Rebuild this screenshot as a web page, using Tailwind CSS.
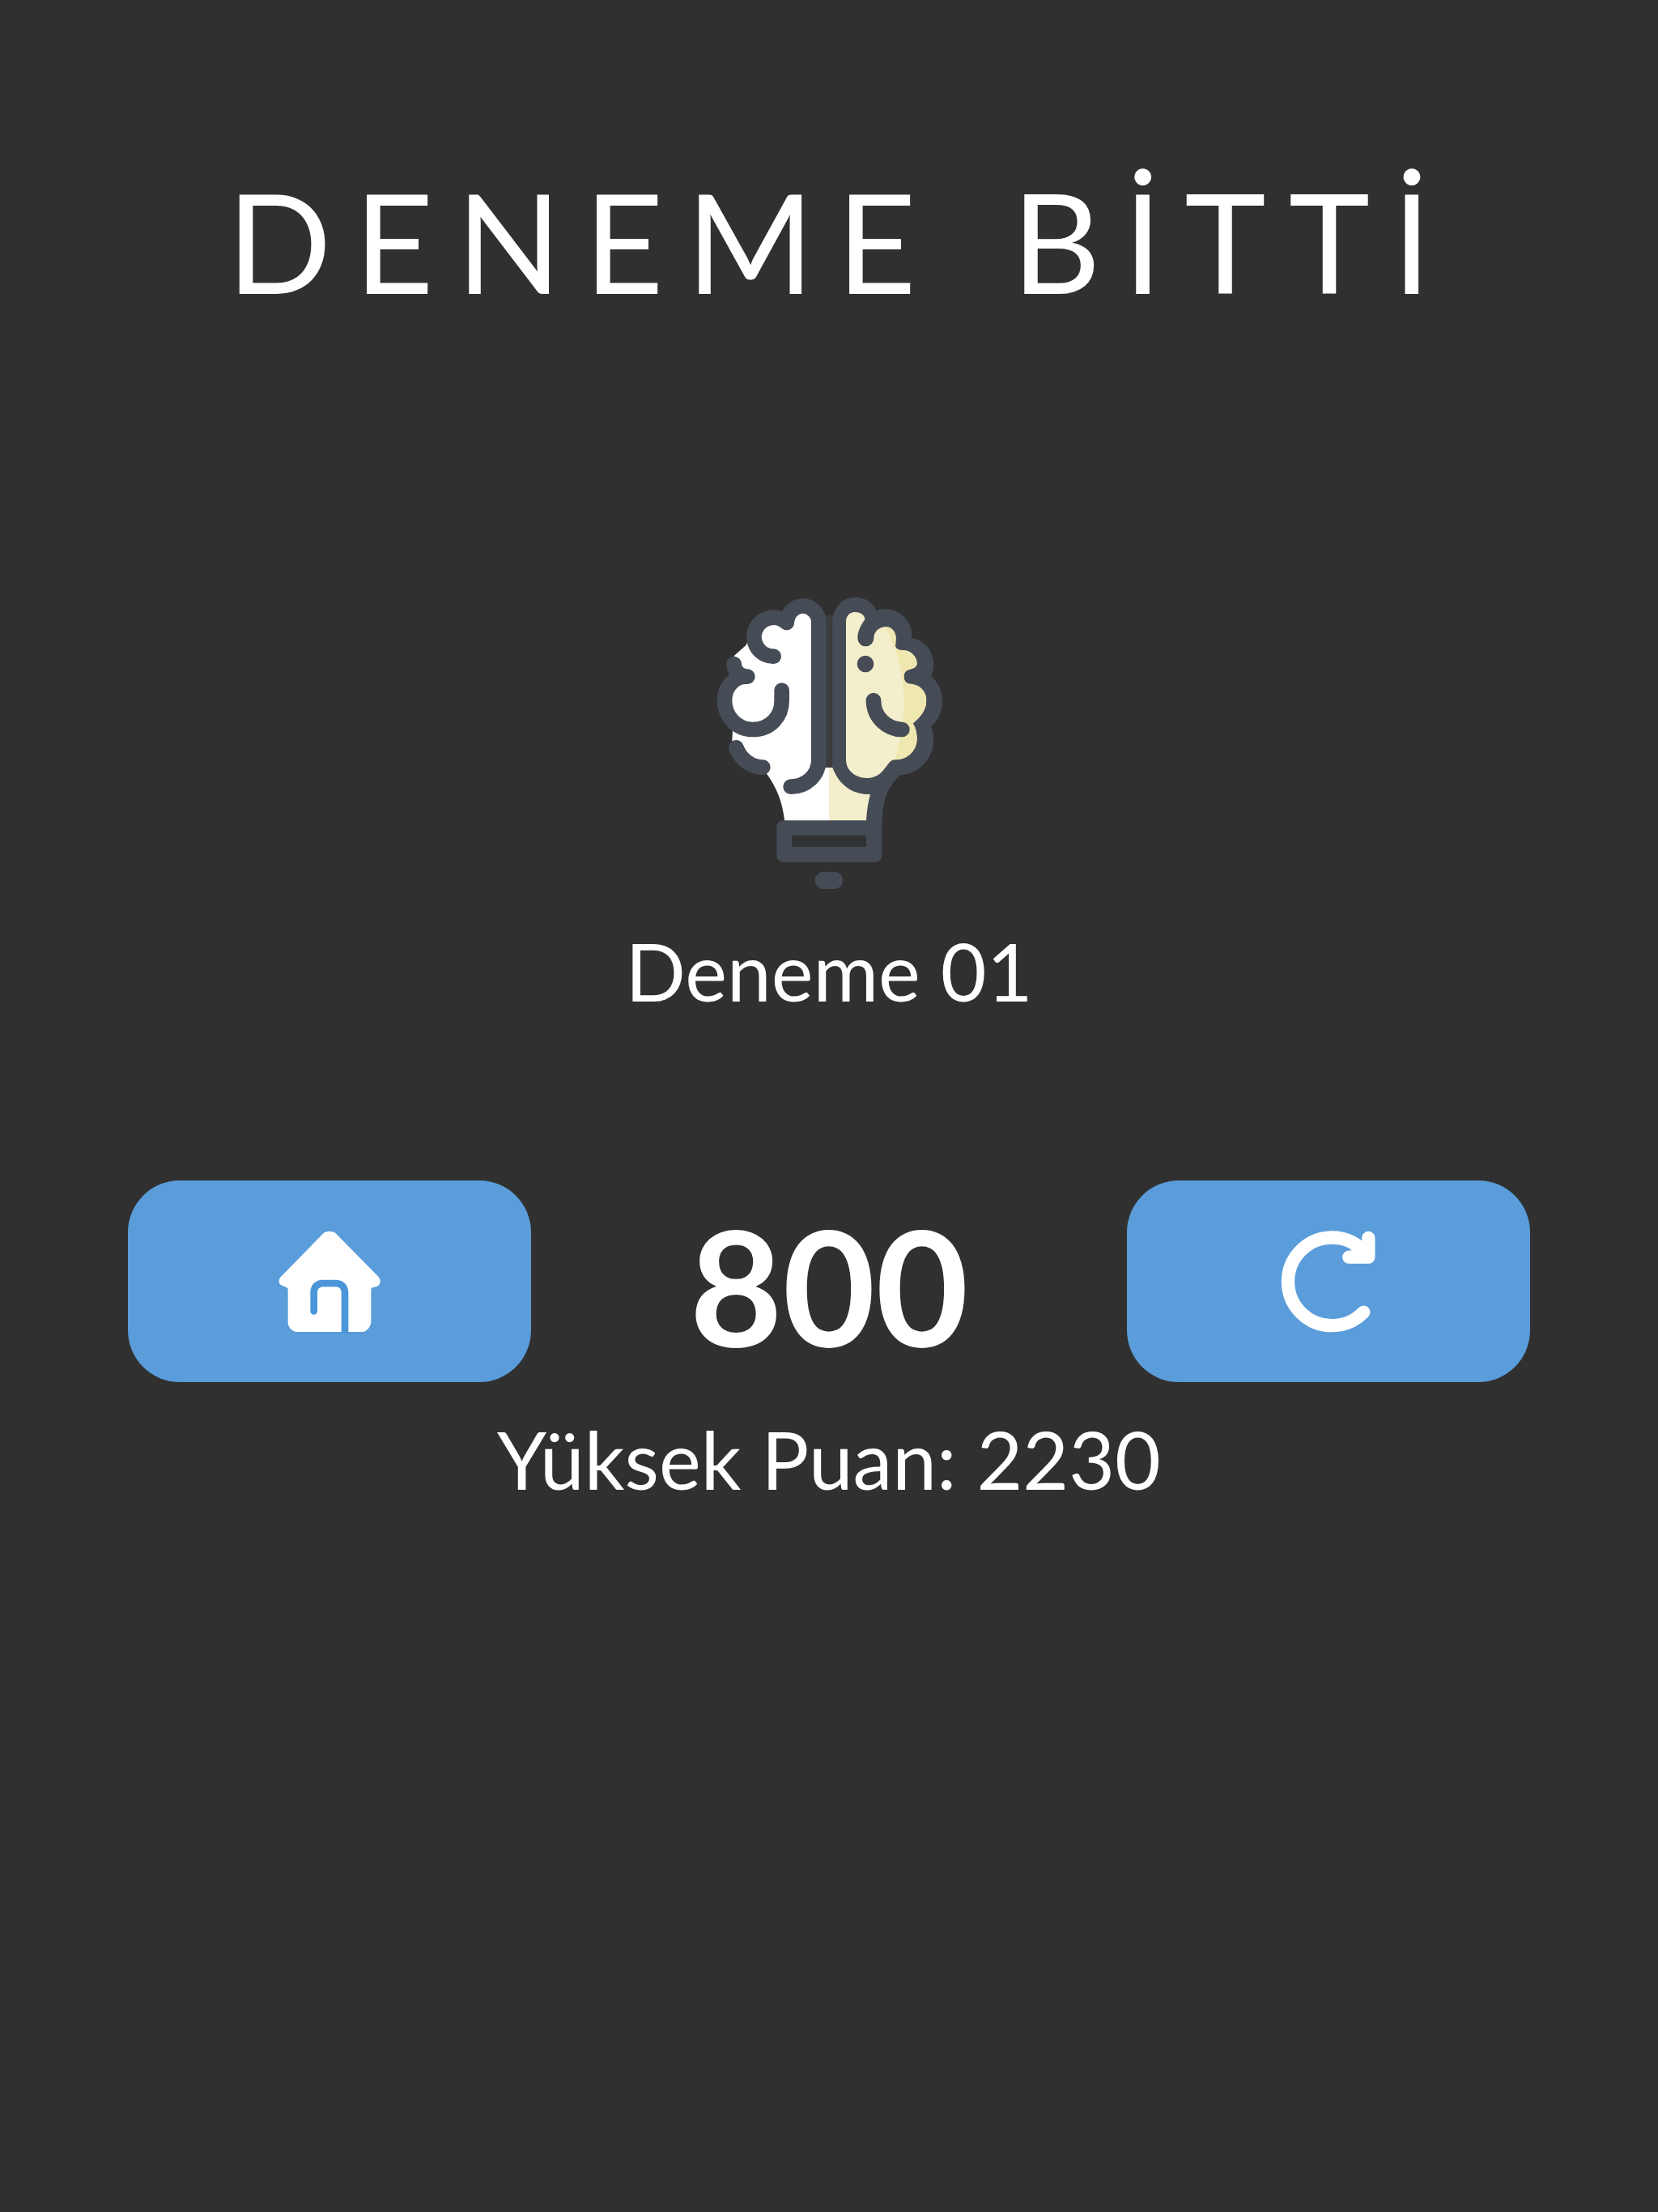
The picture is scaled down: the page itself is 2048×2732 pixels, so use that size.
<!DOCTYPE html>
<html lang="tr">
<head>
  <meta charset="UTF-8" />
  <meta name="viewport" content="width=device-width, initial-scale=1.0" />
  <title>Deneme Bitti</title>
  <script src="https://cdn.jsdelivr.net/npm/@tailwindcss/browser@4"></script>
</head>
<body class="bg-[#303030] text-white font-['Lato',sans-serif]">
  <main class="min-h-screen flex flex-col items-center px-[158px] pt-[212px]">
    <h1 class="pl-7 flex gap-x-[90px] text-[170px] leading-none tracking-[28px]">
      <span>DENEME</span>
      <span>BİTTİ</span>
    </h1>

    <!-- brain / bulb logo -->
    <svg class="mt-[338px] w-[330px] h-[400px]" viewBox="-3 0 990 1200" fill="none" aria-hidden="true">
      <path fill="#fff" d="M340 150L355 95H420L440 130V720L480 684H492V885H328C320 815 300 760 260 706L240 690L180 655L133 585L135 545L105 490V380L140 340L165 300L140 270L185 230L205 180L290 130L335 165Z" />
      <path fill="#f3eecb" d="M492 684H515L660 770L635 885H492Z" />
      <path fill="#3b3b40" d="M476 120H510V684H476Z" />
      <path fill="#464c56" d="M505 684V138A86 88 0 0 1 668 102A98 98 0 0 1 798 203A101 101 0 0 1 870 345A125 125 0 0 1 870 532A131 131 0 0 1 755 712C700 765 690 820 688 900L630 885C632 840 638 810 645 783C580 785 530 750 505 684Z" />
      <clipPath id="lobe">
        <path d="M555 145C555 120 570 108 590 108C612 108 625 122 625 135C608 160 598 180 598 205A30 30 0 0 0 658 205C658 185 672 163 703 163C728 163 740 185 740 205L738 235C742 248 755 250 768 250A51 51 0 0 1 818 300C815 315 800 318 790 320A28 28 0 0 0 790 374C828 374 853 402 853 435C853 472 830 497 803 520C815 540 818 560 818 580A80 77 0 0 1 735 655C705 655 700 723 632 723C590 723 555 695 555 655Z" />
      </clipPath>
      <g clip-path="url(#lobe)">
        <path fill="#f3eecb" d="M540 90H900V740H540Z" />
        <path fill="#efe7b0" d="M690 150C735 220 768 320 770 440C770 520 755 590 733 670H900V150Z" />
      </g>
      <g stroke="#464c56" stroke-width="56" stroke-linecap="round" stroke-linejoin="round">
        <path d="M335 147A60 64 0 0 1 454 138V655C454 715 405 755 350 755" />
        <path d="M335 147A72 72 0 1 0 287 272" />
        <path d="M140 300C140 325 160 347 190 347H185C140 347 105 385 105 435C105 495 150 543 210 543C275 543 317 495 317 435V398" />
        <path d="M148 610C165 655 205 683 247 683" />
        <path d="M657 435C657 500 710 543 763 543" />
      </g>
      <circle cx="627" cy="300" r="31" fill="#464c56" />
      <rect x="298" y="880" width="390" height="154" rx="24" fill="#464c56" />
      <rect x="354" y="935" width="276" height="43" rx="6" fill="#313234" />
      <rect x="440" y="1070" width="103" height="64" rx="32" fill="#464c56" />
    </svg>

    <p class="mt-[30px] text-[98px] leading-none">Deneme 01</p>

    <div class="mt-[210px] w-full flex items-center justify-between">
      <button type="button" aria-label="Ana sayfa" class="w-[498px] h-[249px] rounded-[64px] bg-[#5a9dda] flex items-center justify-center">
        <svg class="size-32" viewBox="70 56 384 384" fill="none" aria-hidden="true">
          <path fill="#fff" d="M242 66Q262 56 282 66L444 230Q456 248 444 262Q434 268 424 268L416 274V400Q410 428 386 434H138Q112 428 108 402V274Q102 266 90 264Q68 256 78 234Z" />
          <path stroke="#4a96d8" stroke-width="26" stroke-linecap="round" d="M204 357V284Q207 258 234 254H290Q316 258 319 284V450" />
        </svg>
      </button>
      <div class="pt-2 text-[198px] leading-none font-bold">800</div>
      <button type="button" aria-label="Tekrar oyna" class="w-[498px] h-[249px] rounded-[64px] bg-[#5a9dda] flex items-center justify-center">
        <svg class="size-32" viewBox="51 56 384 384" fill="none" stroke="#fff" stroke-width="49" stroke-linecap="round" stroke-linejoin="round" aria-hidden="true">
          <path d="M373 361A163 163 0 1 1 370 131" />
          <path d="M391 86V157H319" />
          <path d="M350 125L385 150" />
        </svg>
      </button>
    </div>

    <p class="mt-[46px] text-[98px] leading-none">Yüksek Puan: 2230</p>
  </main>
</body>
</html>
